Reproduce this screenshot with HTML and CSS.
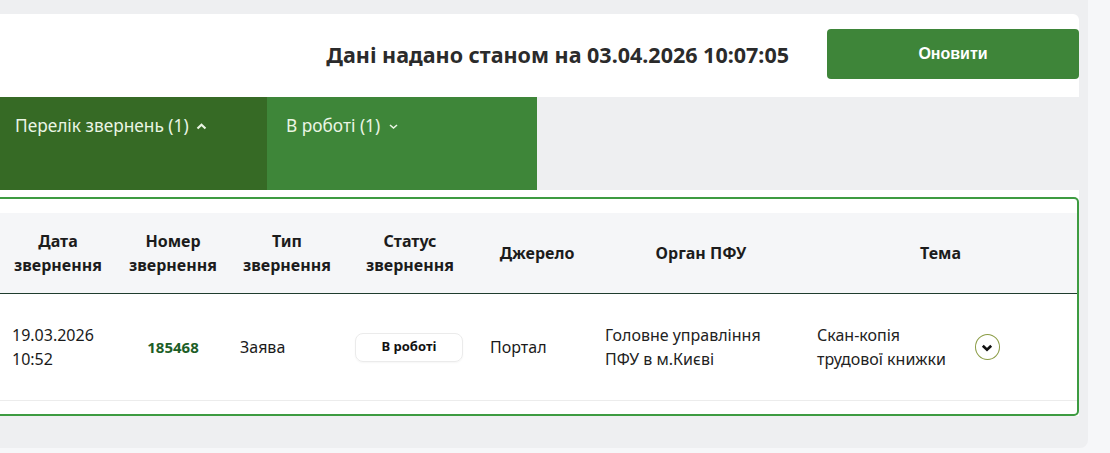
FILE: index.html
```html
<!DOCTYPE html>
<html lang="uk">
<head>
  <meta charset="UTF-8" />
  <meta name="viewport" content="width=device-width, initial-scale=1" />
  <title>Мої звернення</title>
  <link rel="stylesheet" href="styles.css">
</head>
<body>
  <div class="main">
    <div class="status-card">
      <div class="status-text">Дані надано станом на 03.04.2026 10:07:05</div>
      <button class="btn">Оновити</button>
    </div>

    <div class="tabs">
      <div class="tab tab-active">
        Перелік звернень (1)
        <svg class="caret" width="11" height="7" viewBox="0 0 11 7"><polyline points="1.5,5.5 5.5,1.8 9.5,5.5" fill="none" stroke="currentColor" stroke-width="2.2"/></svg>
      </div>
      <div class="tab">
        В роботі (1)
        <svg class="caret" width="11" height="7" viewBox="0 0 11 7"><polyline points="2,2 5.5,5 9,2" fill="none" stroke="currentColor" stroke-width="1.6"/></svg>
      </div>
    </div>

    <div class="panel">
      <div class="table-card">
        <table class="requests">
          <colgroup>
            <col style="width:116px">
            <col style="width:114px">
            <col style="width:114px">
            <col style="width:132px">
            <col style="width:122px">
            <col style="width:206px">
            <col>
          </colgroup>
          <thead>
            <tr>
              <th>Дата<br>звернення</th>
              <th>Номер<br>звернення</th>
              <th>Тип<br>звернення</th>
              <th>Статус<br>звернення</th>
              <th>Джерело</th>
              <th>Орган ПФУ</th>
              <th>Тема</th>
            </tr>
          </thead>
          <tbody>
            <tr>
              <td class="c-date">19.03.2026<br>10:52</td>
              <td class="c-num"><a href="#">185468</a></td>
              <td class="c-type">Заява</td>
              <td class="c-status"><span class="badge">В роботі</span></td>
              <td class="c-source">Портал</td>
              <td class="c-org">Головне управління<br>ПФУ в м.Києві</td>
              <td class="c-topic">
                <div class="topic">
                  <span>Скан-копія<br>трудової книжки</span>
                  <span class="expand">
                    <svg width="12" height="8" viewBox="0 0 12 8"><polyline points="1.8,1.8 6,5.8 10.2,1.8" fill="none" stroke="#111" stroke-width="2.6"/></svg>
                  </span>
                </div>
              </td>
            </tr>
          </tbody>
        </table>
      </div>
    </div>
  </div>
</body>
</html>
```

FILE: styles.css
```css
body {
  margin: 0;
  background: #f6f7f9;
  font-family: 'Noto Sans', 'Open Sans', sans-serif;
  color: #1a1a1a;
}

.main {
  width: 1088px;
  height: 448px;
  padding-top: 14px;
  box-sizing: border-box;
  background: #eeeff1;
  border-radius: 0 0 8px 0;
  overflow: hidden;
}

.status-card {
  width: 1079px;
  height: 83px;
  box-sizing: border-box;
  padding-bottom: 3px;
  background: #fff;
  border-radius: 0 6px 0 0;
  display: flex;
  justify-content: flex-end;
  align-items: center;
  gap: 38px;
}

.status-text {
  font-size: 21.5px;
  font-weight: 700;
  color: #2b2b2b;
}

.btn {
  width: 252px;
  height: 50px;
  border: none;
  border-radius: 4px;
  background: #3e8539;
  color: #fff;
  font-family: 'Liberation Sans', Arial, sans-serif;
  font-size: 16px;
  font-weight: 700;
  cursor: pointer;
}

.tabs {
  display: flex;
  height: 93px;
}

.tab {
  width: 270px;
  box-sizing: border-box;
  padding: 17px 0 0 19px;
  background: #3e8639;
  color: #eaf5e4;
  font-size: 17.3px;
  line-height: 24px;
}

.tab-active {
  width: 267px;
  padding-left: 15px;
  background: #366a25;
}

.caret {
  margin-left: 3px;
  vertical-align: 2px;
}

.panel {
  width: 1079px;
  padding-top: 7px;
  background: #fff;
}

.table-card {
  border: 2px solid #3d9b41;
  border-left: none;
  border-radius: 0 5px 5px 0;
  padding: 14px 0 13px;
  background: #fff;
}

.requests {
  width: 100%;
  border-collapse: collapse;
  table-layout: fixed;
}

.requests th {
  height: 80px;
  padding: 0 6px;
  background: #f5f6f8;
  border-bottom: 1px solid #1f3d2e;
  font-size: 16px;
  font-weight: 700;
  line-height: 24px;
  color: #1c1c1c;
  text-align: center;
}

.requests td {
  height: 106px;
  padding: 0;
  border-bottom: 1px solid #ececec;
  font-size: 16px;
  line-height: 24px;
  vertical-align: middle;
}

.c-date {
  padding-left: 12px !important;
}

.c-num {
  text-align: center;
}

.c-num a {
  color: #1d5e27;
  font-size: 15px;
  font-weight: 700;
  text-decoration: none;
}

.c-type {
  padding-left: 10px !important;
}

.c-status {
  padding-left: 11px !important;
}

.badge {
  display: inline-block;
  width: 108px;
  height: 29px;
  box-sizing: border-box;
  border: 1.5px solid #ebebeb;
  border-radius: 8px;
  box-shadow: 0 1px 2px rgba(0,0,0,0.04);
  font-size: 13px;
  font-weight: 700;
  line-height: 25px;
  text-align: center;
  color: #111;
}

.c-source {
  padding-left: 14px !important;
}

.c-org {
  padding-left: 7px !important;
  color: #222;
}

.c-topic {
  padding-left: 13px !important;
  color: #222;
}

.topic {
  display: flex;
  align-items: center;
  gap: 29px;
}

.expand {
  width: 23px;
  height: 23px;
  border: 1px solid #8b9c45;
  border-radius: 50%;
  display: flex;
  align-items: center;
  justify-content: center;
  padding-top: 1px;
  box-sizing: content-box;
}
```
